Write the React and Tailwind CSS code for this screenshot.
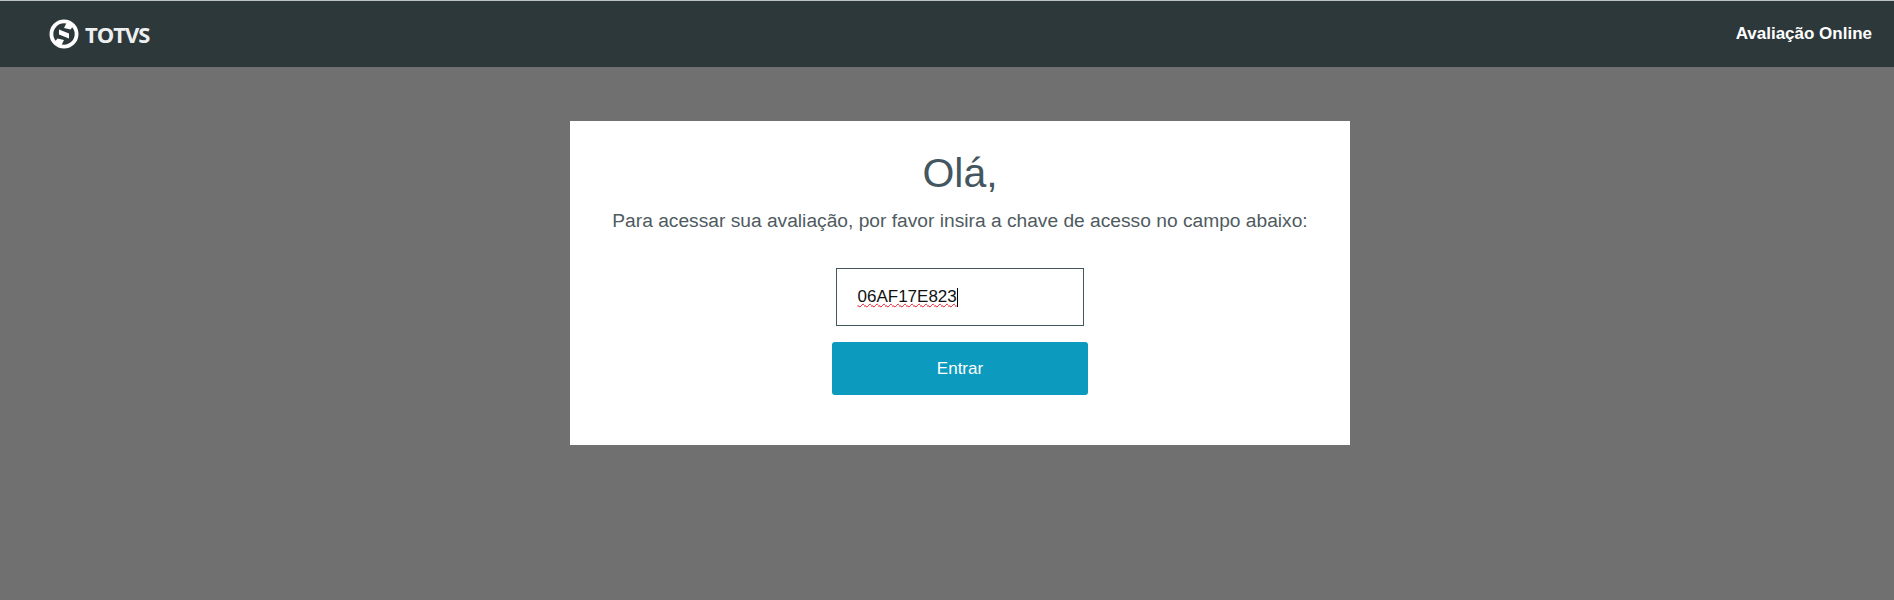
import React from 'react'

function TotvsLogo() {
  return (
    <div className="flex items-center gap-[6px]">
      <svg width="30" height="30" viewBox="0 0 30 30" fill="none">
        <circle cx="15" cy="15" r="12.6" stroke="#fff" strokeWidth="3.8" />
        <path d="M10 10.5 L20 14.5 L20 19.5 L10 15.5 Z" fill="#fff" />
        <path d="M18 3 L25 6 L21.5 10.5 L15 9 Z" fill="#fff" />
        <path d="M12 27 L5 24 L8.5 19.5 L15 21 Z" fill="#fff" />
      </svg>
      <span className="font-['Open_Sans',sans-serif] font-bold text-[22px] leading-none tracking-[-1px] text-[#eef0f0]">TOTVS</span>
    </div>
  )
}

export default function App() {
  return (
    <div className="min-h-[600px] bg-[#707070] font-['Liberation_Sans',Arial,sans-serif]">
      <header className="h-[67px] border-t border-[#bcc1c2] bg-[#2d383b] pl-[49px] pr-[22px] flex items-center justify-between">
        <TotvsLogo />
        <span className="text-[17px] font-bold text-white">Avaliação Online</span>
      </header>

      <main className="pt-[54px] pl-[26px] flex justify-center">
        <div className="w-[780px] h-[324px] bg-white flex flex-col items-center">
          <h1 className="mt-[28px] text-[41px] leading-[48px] font-normal text-[#44565f]">Olá,</h1>
          <p className="mt-[11px] text-[19.2px] leading-[26px] text-[#4f5b5f]">
            Para acessar sua avaliação, por favor insira a chave de acesso no campo abaixo:
          </p>

          <div className="mt-[34px] -ml-px w-[248px] h-[58px] border border-[#44565f] flex items-center pl-[21px] text-[17px] text-[#111]">
            <span className="underline decoration-wavy decoration-[#e81123] decoration-1 underline-offset-1">06AF17E823</span>
            <span className="w-px h-[19px] bg-black"></span>
          </div>

          <button className="mt-[16px] w-[256px] h-[53px] rounded-[3px] bg-[#0c9abe] text-white text-[17px]">
            Entrar
          </button>
        </div>
      </main>
    </div>
  )
}
